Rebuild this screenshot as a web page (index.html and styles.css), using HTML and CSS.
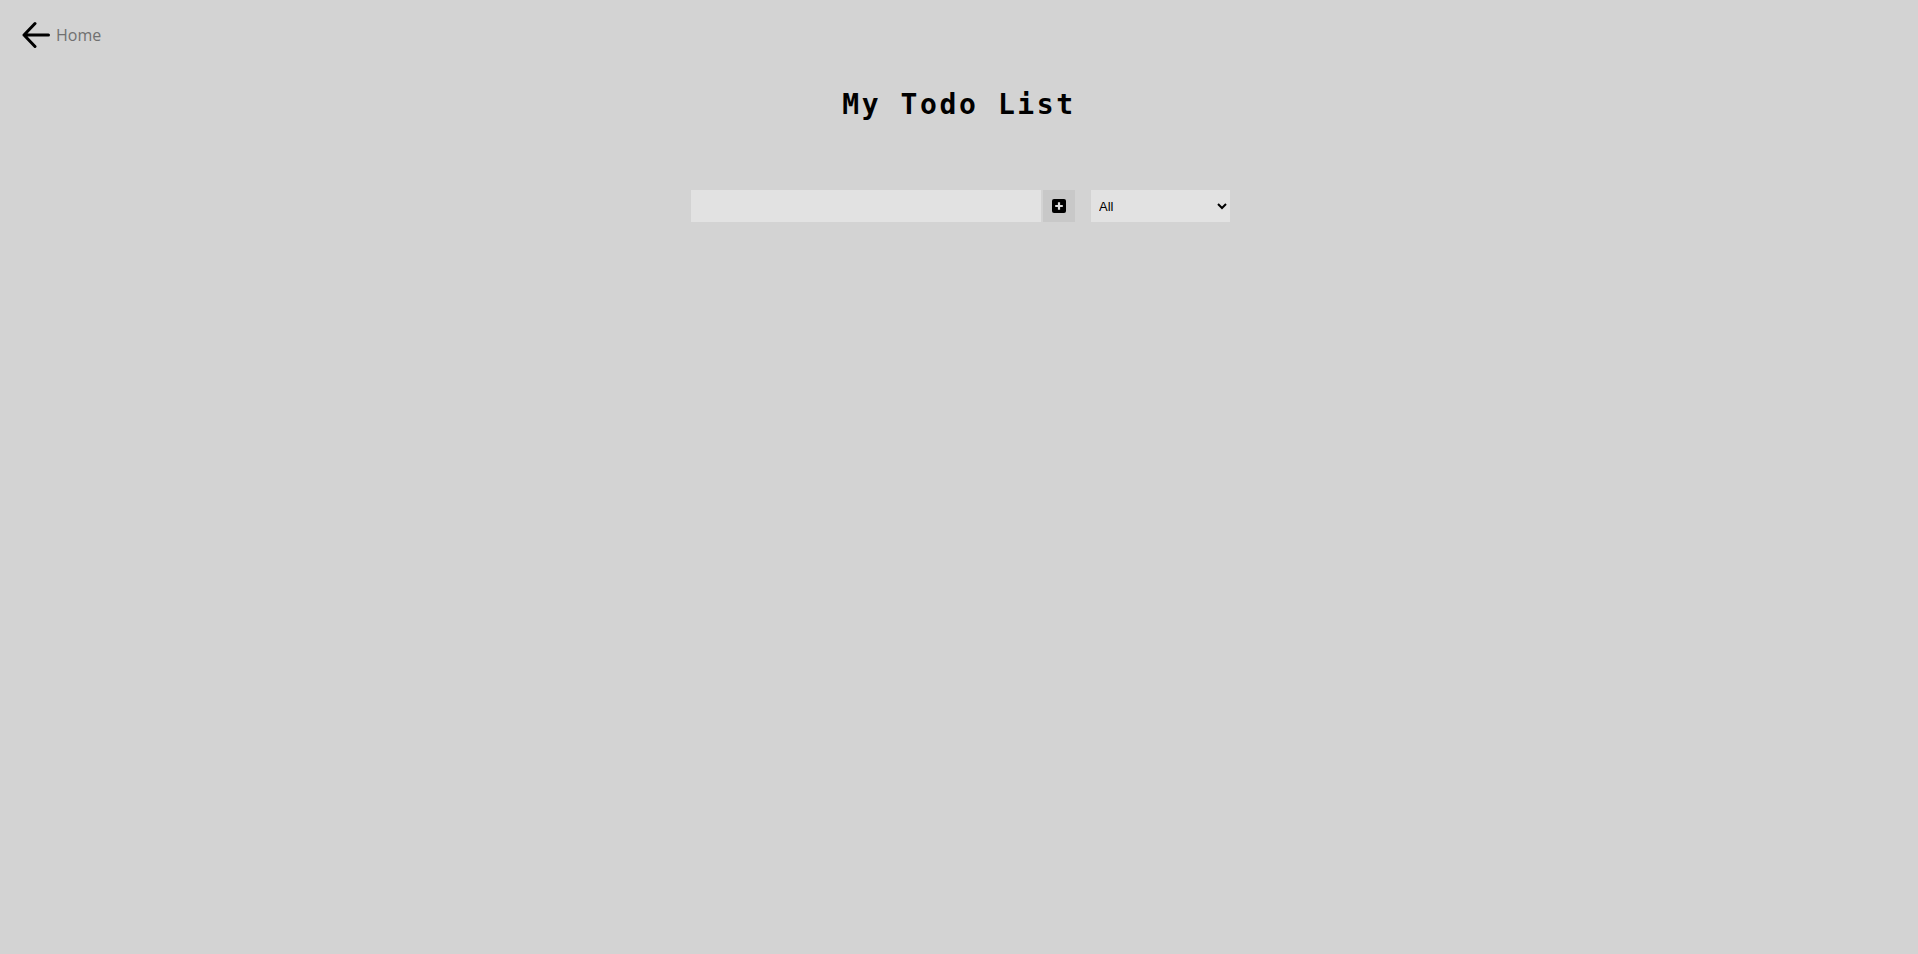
FILE: index.html
```html
<!DOCTYPE html>
<html>
<head>
<meta charset="utf-8">
<link rel="stylesheet" href="styles.css">
</head>
<body>
<header class="top">
  <a class="home" href="#">
    <svg class="arrow" width="28" height="28" viewBox="0 0 28 28"><path d="M26.5 14H2M13 2.5L2 14l11 11.5" fill="none" stroke="#000" stroke-width="3" stroke-linecap="round" stroke-linejoin="round"/></svg>
    <span>Home</span>
  </a>
</header>
<h1 class="title">My Todo List</h1>
<form class="todo-form">
  <input class="todo-input" type="text">
  <button class="add-btn" type="button">
    <svg width="14" height="14" viewBox="0 0 14 14"><rect width="14" height="14" rx="2" fill="#000"/><path d="M7 3.2v7.6M3.2 7h7.6" stroke="#ddd" stroke-width="2.2"/></svg>
  </button>
  <select class="filter">
    <option>All</option>
    <option>Completed</option>
    <option>Uncompleted</option>
  </select>
</form>
</body>
</html>
```
FILE: styles.css
```css
html, body {
  margin: 0;
  padding: 0;
  background: #d3d3d3;
  font-family: "Open Sans", "Noto Sans", sans-serif;
}
.top {
  padding: 21px 0 0 22px;
  height: 32px;
}
.home {
  display: inline-flex;
  align-items: center;
  gap: 6px;
  text-decoration: none;
  color: #707070;
  font-size: 16px;
}
.arrow { display: block; }
.title {
  margin: 32px 0 0 0;
  text-align: center;
  font-family: "DejaVu Sans Mono", "Liberation Mono", monospace;
  font-weight: bold;
  font-size: 28px;
  letter-spacing: 2.6px;
  line-height: 40px;
  color: #000;
}
.todo-form {
  display: flex;
  justify-content: center;
  align-items: center;
  margin-top: 65px;
  padding-left: 3px;
}
.todo-input {
  width: 350px;
  height: 32px;
  box-sizing: border-box;
  border: none;
  background: #e2e2e2;
  margin: 0;
  padding: 0 8px;
}
.add-btn {
  width: 32px;
  height: 32px;
  margin-left: 2px;
  border: none;
  background: #c8c8c8;
  padding: 0;
  display: flex;
  align-items: center;
  justify-content: center;
}
.filter {
  margin-left: 16px;
  width: 139px;
  height: 32px;
  border: none;
  background: #e2e2e2;
  font-family: "Liberation Sans", Arial, sans-serif;
  font-size: 13px;
  padding: 0 4px;
  color: #000;
}
```
